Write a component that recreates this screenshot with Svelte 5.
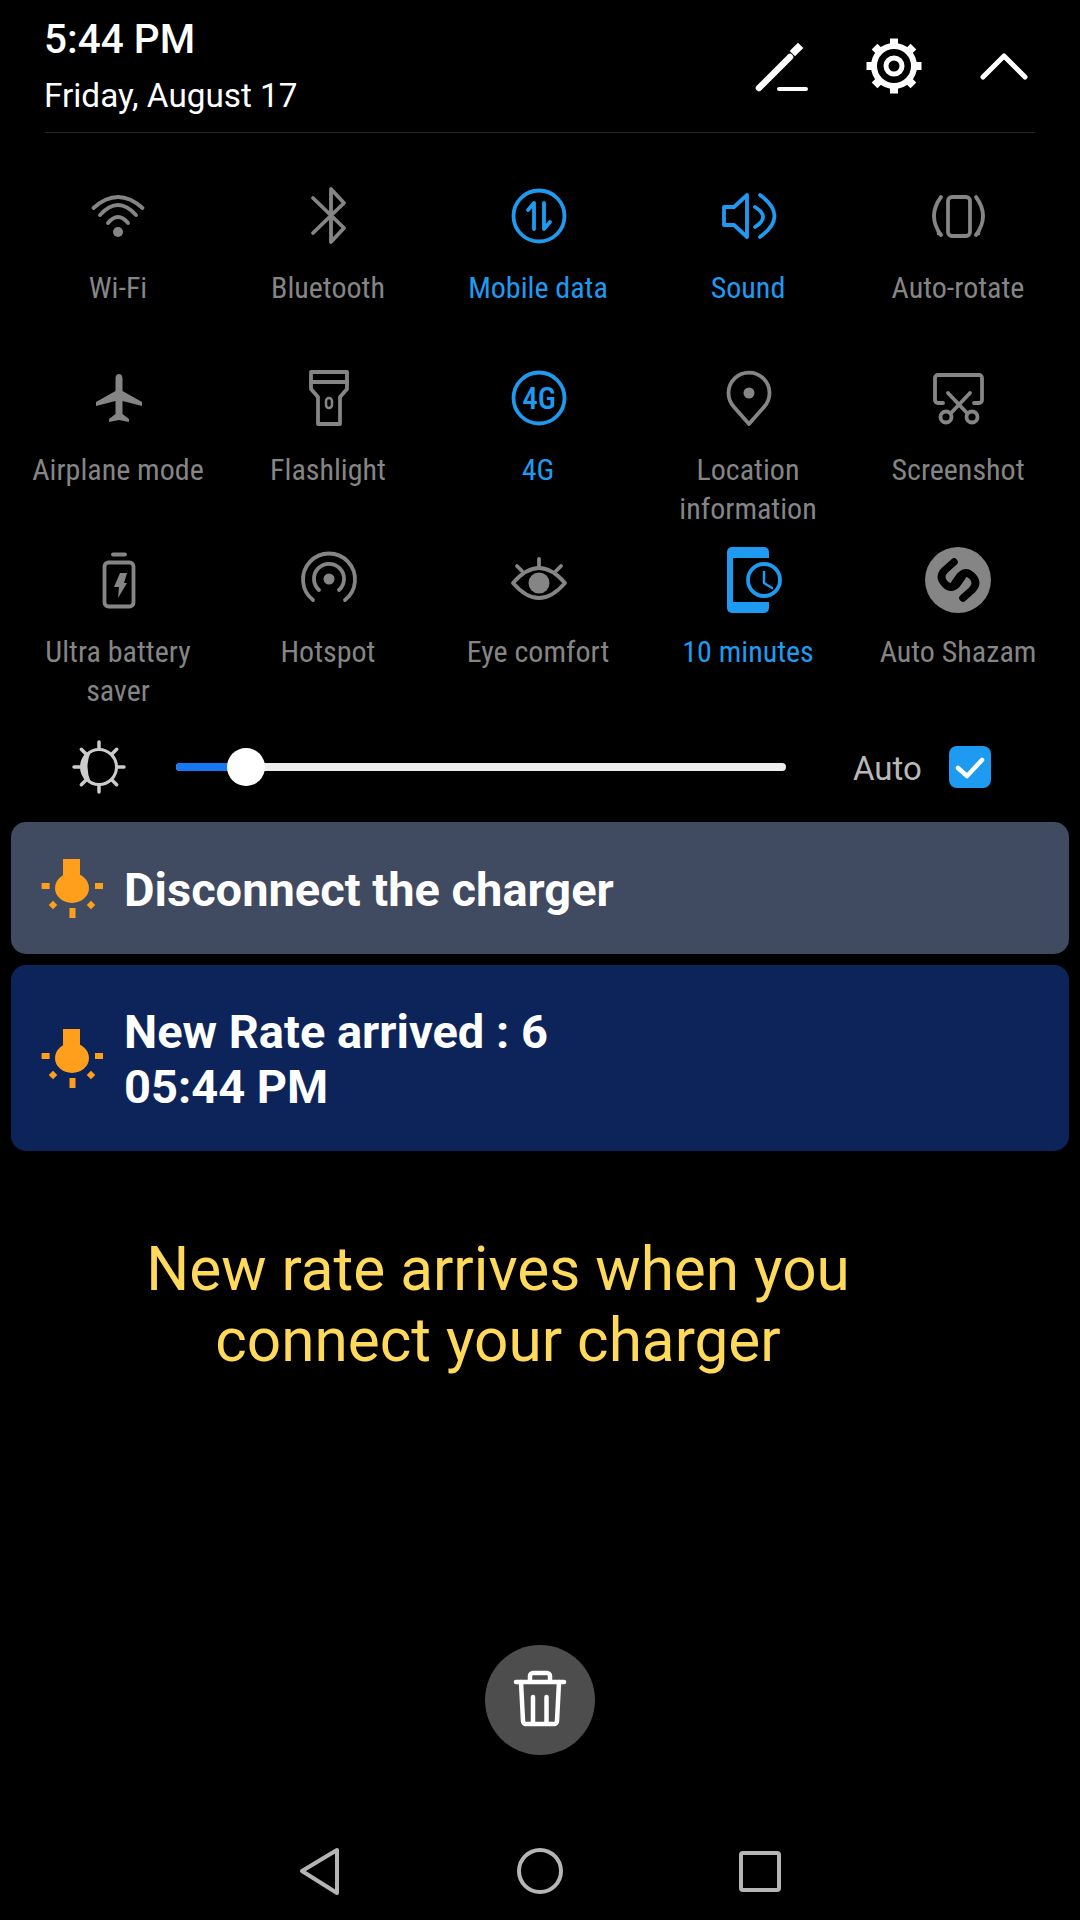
<script>
    // Gear teeth and brightness rays are just rotated copies
    const teeth = [0, 45, 90, 135, 180, 225, 270, 315];
</script>

<div class="page">
    <header class="top">
        <div class="when">
            <div class="time">5:44 PM</div>
            <div class="date">Friday, August 17</div>
        </div>
        <div class="actions">
            <svg class="act" viewBox="0 0 60 60" width="60" height="60">
                <path d="M5 52 L36 21" stroke-width="6.5" />
                <path d="M41 15 L44 12" stroke-width="7.5" stroke-linecap="square" />
                <path d="M25 53 H52" stroke-width="4" />
            </svg>
            <svg class="act gear" viewBox="0 0 60 60" width="60" height="60">
                <circle cx="30" cy="30" r="20" stroke-width="6" />
                <circle cx="30" cy="30" r="8" stroke-width="5" />
                {#each teeth as deg}
                    <path d="M30 9 V2.5" stroke-width="8" transform="rotate({deg} 30 30)" />
                {/each}
            </svg>
            <svg class="act chev" viewBox="0 0 60 60" width="60" height="60">
                <path d="M9 41 L30 20 L51 41" stroke-width="5" />
            </svg>
        </div>
    </header>

    <section class="tiles">
        <div class="tile">
            <svg class="icon" viewBox="0 0 70 70">
                <path d="M10.5 27 Q35 5 59.5 27" />
                <path d="M17 34 Q35 14 53 34" />
                <path d="M25 42 Q35 30 45 42" />
                <circle class="solid" cx="35" cy="51" r="5" />
            </svg>
            <span>Wi-Fi</span>
        </div>
        <div class="tile">
            <svg class="icon" viewBox="0 0 70 70">
                <path d="M20 17 L51 47 L38 61 V8 L51 22 L20 52" />
            </svg>
            <span>Bluetooth</span>
        </div>
        <div class="tile on">
            <svg class="icon" viewBox="0 0 70 70">
                <circle cx="36" cy="35" r="25.5" />
                <path d="M31 48 V22 L25 29" />
                <path d="M41 22 V48 L47 41" />
            </svg>
            <span>Mobile data</span>
        </div>
        <div class="tile on">
            <svg class="icon" viewBox="0 0 70 70">
                <path d="M34 14 L21 26 H11 V44 H21 L34 56 Z" />
                <path d="M42 26 Q58 36 42 46" />
                <path d="M47 14 Q76 35 47 56" />
            </svg>
            <span>Sound</span>
        </div>
        <div class="tile">
            <svg class="icon" viewBox="0 0 70 70">
                <rect x="25" y="16" width="22" height="39" rx="4" />
                <path d="M18 16 Q4 35 18 54" />
                <path d="M53 16 Q67 35 53 54" />
                <path class="solid" d="M13 43 L20 55 L14 54 Z" />
                <path class="solid" d="M58 43 L51 55 L57 54 Z" />
            </svg>
            <span>Auto-rotate</span>
        </div>

        <div class="tile">
            <svg class="icon" viewBox="0 0 70 70">
                <path class="solid" d="M36 11 c3 0 3.5 3 3.5 5 V28 L59 39 V43 L39.5 38 V51 L46 56 V59 L36 57 L26 59 V56 L32.5 51 V38 L13 43 V39 L32.5 28 V16 c0-2 .5-5 3.5-5 Z" />
            </svg>
            <span>Airplane mode</span>
        </div>
        <div class="tile">
            <svg class="icon" viewBox="0 0 70 70">
                <path d="M18 9 H54 V26 L47 34 V61 H25 V34 L18 26 Z" />
                <path d="M18 19 H54" />
                <rect class="thin" x="33" y="35" width="6" height="10" rx="3" />
            </svg>
            <span>Flashlight</span>
        </div>
        <div class="tile on">
            <svg class="icon" viewBox="0 0 70 70">
                <circle cx="36" cy="35" r="25.5" />
                <text class="fourg" x="36" y="46">4G</text>
            </svg>
            <span>4G</span>
        </div>
        <div class="tile">
            <svg class="icon" viewBox="0 0 70 70">
                <path d="M36 61 L21 44 A20.5 20.5 0 1 1 51 44 Z" />
                <circle class="solid" cx="36" cy="30" r="5.5" />
            </svg>
            <span>Location information</span>
        </div>
        <div class="tile">
            <svg class="icon" viewBox="0 0 70 70">
                <path d="M20 40 H15 a3 3 0 0 1-3-3 V15 a3 3 0 0 1 3-3 H56 a3 3 0 0 1 3 3 V37 a3 3 0 0 1-3 3 H51" />
                <path d="M25 30 L44 50" />
                <path d="M47 30 L28 50" />
                <circle cx="23" cy="54" r="5.5" />
                <circle cx="49" cy="54" r="5.5" />
            </svg>
            <span>Screenshot</span>
        </div>

        <div class="tile">
            <svg class="icon" viewBox="0 0 70 70">
                <path d="M30 9.5 H42" />
                <rect x="21.5" y="17.5" width="29" height="44" rx="4" />
                <path class="solid" d="M37 28 H44 L41 38 H44 L35 53 L36 42 H31 Z" />
            </svg>
            <span>Ultra battery saver</span>
        </div>
        <div class="tile">
            <svg class="icon" viewBox="0 0 70 70">
                <path d="M20 55 A26 26 0 1 1 52 55" />
                <path d="M26 45 A15 15 0 1 1 46 45" />
                <circle class="solid" cx="36" cy="34" r="5.5" />
            </svg>
            <span>Hotspot</span>
        </div>
        <div class="tile">
            <svg class="icon" viewBox="0 0 70 70">
                <path d="M10 38 Q36 8 62 38 Q36 68 10 38 Z" />
                <circle class="solid" cx="36" cy="38" r="10.5" />
                <path d="M36 14 V22" />
                <path d="M14 21 L19 26" />
                <path d="M58 21 L53 26" />
            </svg>
            <span>Eye comfort</span>
        </div>
        <div class="tile on">
            <svg class="icon" viewBox="0 0 70 70">
                <rect class="solid" x="14" y="2" width="42" height="66" rx="5" />
                <rect class="screen" x="20" y="13" width="38" height="44" />
                <circle class="dial" cx="51" cy="35" r="16" />
                <path class="thin" d="M51 27 V38 L59 43" />
            </svg>
            <span>10 minutes</span>
        </div>
        <div class="tile">
            <svg class="icon" viewBox="0 0 70 70">
                <circle class="solid" cx="35" cy="35" r="33" />
                <path class="shazam" d="M31 17 L22 25 Q15 32 22 39 Q28 45 34 39 L39 32" />
                <path class="shazam" d="M40 53 L49 45 Q56 38 49 31 Q43 25 37 31 L32 38" />
            </svg>
            <span>Auto Shazam</span>
        </div>
    </section>

    <section class="brightness">
        <svg class="sun" viewBox="0 0 56 54" width="56" height="54">
            <circle cx="28" cy="27" r="17.5" stroke-width="3" />
            <path d="M10.5 27 A17.5 17.5 0 0 1 20 11.5 Q13 27 20 42.5 A17.5 17.5 0 0 1 10.5 27 Z" fill="#ccc" />
            {#each teeth as deg}
                <path d="M28 8 V2" stroke-width="3.5" transform="rotate({deg} 28 27)" />
            {/each}
        </svg>
        <div class="track">
            <div class="fill"></div>
            <div class="knob"></div>
        </div>
        <span class="auto">Auto</span>
        <div class="check">
            <svg viewBox="0 0 42 42" width="42" height="42">
                <path d="M9 22 L18 30 L33 14" />
            </svg>
        </div>
    </section>

    <div class="card grey">
        <svg class="bulb" viewBox="0 0 62 59" width="62" height="59">
            <rect x="22" y="0" width="17" height="16" />
            <ellipse cx="31" cy="29" rx="17" ry="15" />
            <rect x="0.6" y="24" width="8" height="6" />
            <rect x="54" y="24" width="8" height="6" />
            <rect x="28.5" y="49" width="6" height="10" />
            <rect x="9" y="43" width="6" height="6" transform="rotate(45 12 46)" />
            <rect x="47" y="43" width="6" height="6" transform="rotate(45 50 46)" />
        </svg>
        <div class="msg">Disconnect the charger</div>
    </div>

    <div class="card navy">
        <svg class="bulb" viewBox="0 0 62 59" width="62" height="59">
            <rect x="22" y="0" width="17" height="16" />
            <ellipse cx="31" cy="29" rx="17" ry="15" />
            <rect x="0.6" y="24" width="8" height="6" />
            <rect x="54" y="24" width="8" height="6" />
            <rect x="28.5" y="49" width="6" height="10" />
            <rect x="9" y="43" width="6" height="6" transform="rotate(45 12 46)" />
            <rect x="47" y="43" width="6" height="6" transform="rotate(45 50 46)" />
        </svg>
        <div class="msg">New Rate arrived : 6<br />05:44 PM</div>
    </div>

    <p class="hint">New rate arrives when you<br />connect your charger</p>

    <div class="clear">
        <svg viewBox="0 0 110 110" width="110" height="110">
            <path d="M31 37 H79" />
            <path d="M45 36 V31 a3 3 0 0 1 3-3 H62 a3 3 0 0 1 3 3 V36" />
            <path d="M36 37 L38 76 a3 3 0 0 0 3 3 H69 a3 3 0 0 0 3-3 L74 37" />
            <path d="M48 52 V78" />
            <path d="M61.5 52 V78" />
        </svg>
    </div>

    <nav class="nav">
        <svg viewBox="0 0 60 60" width="60" height="60"><path d="M12 30 L47 9 V52 Z" /></svg>
        <svg viewBox="0 0 60 60" width="60" height="60"><circle cx="30" cy="30" r="21" /></svg>
        <svg viewBox="0 0 60 60" width="60" height="60"><rect x="11" y="12" width="38" height="37" rx="2" /></svg>
    </nav>
</div>

<style>
    :global(body) {
        background: #000;
    }

    .page {
        width: 1080px;
        height: 1920px;
        display: flex;
        flex-direction: column;
        background: #000;
        color: #fff;
        font-family: Roboto, "Liberation Sans", sans-serif;
        overflow: hidden;
    }

    .top {
        height: 132px;
        margin: 0 45px;
        border-bottom: 1px solid #262626;
        display: flex;
        justify-content: space-between;
    }

    .when {
        margin-left: -1px;
    }

    .time {
        font-size: 40.5px;
        font-weight: 500;
        line-height: 46px;
        margin-top: 16px;
    }

    .date {
        font-size: 33.3px;
        line-height: 40px;
        margin-top: 14px;
    }

    .actions {
        display: flex;
        gap: 50px;
        padding: 36px 0 0 0;
        margin-right: 1px;
        height: 60px;
    }

    .act {
        fill: none;
        stroke: #fff;
        stroke-linecap: round;
        stroke-linejoin: round;
    }

    .gear path {
        stroke-linecap: butt;
    }

    .tiles {
        display: grid;
        grid-template-columns: repeat(5, 210px);
        grid-auto-rows: 182px;
        margin: 48px 0 0 13px;
    }

    .tile {
        display: flex;
        flex-direction: column;
        align-items: center;
        color: #858585;
    }

    .tile.on {
        color: #1e9bf0;
    }

    .tile span {
        margin-top: 18px;
        width: 190px;
        text-align: center;
        font-size: 30px;
        line-height: 38.5px;
        font-stretch: 75%;
    }

    .icon {
        width: 70px;
        height: 70px;
        fill: none;
        stroke: currentColor;
        stroke-width: 3.8;
        stroke-linecap: round;
        stroke-linejoin: round;
    }

    .icon .solid {
        fill: currentColor;
        stroke: none;
    }

    .icon .thin {
        stroke-width: 2.5;
    }

    .icon .screen {
        fill: #000;
        stroke: none;
    }

    .icon .dial {
        fill: #000;
    }

    .icon .shazam {
        stroke: #000;
        stroke-width: 7.5;
    }

    .fourg {
        fill: currentColor;
        stroke: none;
        font-size: 31px;
        font-weight: 500;
        font-stretch: 75%;
        text-anchor: middle;
    }

    .brightness {
        display: flex;
        align-items: center;
        height: 54px;
        margin-top: 13px;
        padding-left: 71px;
    }

    .sun {
        fill: none;
        stroke: #ccc;
        stroke-linecap: round;
    }

    .sun path:first-of-type {
        stroke: none;
    }

    .track {
        position: relative;
        width: 610px;
        height: 8px;
        margin-left: 49px;
        border-radius: 4px;
        background: #eee;
    }

    .fill {
        width: 60px;
        height: 100%;
        border-radius: 4px;
        background: #1778f2;
    }

    .knob {
        position: absolute;
        left: 51px;
        top: -15px;
        width: 38px;
        height: 38px;
        border-radius: 50%;
        background: #fff;
    }

    .auto {
        margin-left: 67px;
        padding-top: 2px;
        font-size: 33px;
        color: #b8b8b8;
    }

    .check {
        width: 42px;
        height: 42px;
        margin-left: 27px;
        border-radius: 8px;
        background: #1e9bf0;
    }

    .check svg {
        display: block;
        fill: none;
        stroke: #fff;
        stroke-width: 4.5;
        stroke-linecap: round;
        stroke-linejoin: round;
    }

    .card {
        display: flex;
        align-items: center;
        gap: 21px;
        margin: 0 11px;
        padding-left: 30px;
        border-radius: 15px;
    }

    .grey {
        height: 132px;
        margin-top: 28px;
        background: #404a60;
    }

    .navy {
        height: 186px;
        margin-top: 11px;
        background: #0d245b;
    }

    .bulb {
        flex: none;
        fill: #ff9f1c;
    }

    .msg {
        padding-top: 2px;
        font-size: 47px;
        font-weight: 700;
        line-height: 55px;
    }

    .hint {
        width: 996px;
        margin: 83px 0 0;
        text-align: center;
        font-size: 60.3px;
        line-height: 71px;
        color: #ffd95a;
    }

    .clear {
        width: 110px;
        height: 110px;
        margin: auto auto 86px;
        border-radius: 50%;
        background: #4d4d4d;
    }

    .clear svg {
        display: block;
        fill: none;
        stroke: #fff;
        stroke-width: 4.5;
        stroke-linecap: round;
        stroke-linejoin: round;
    }

    .nav {
        display: flex;
        justify-content: center;
        gap: 160px;
        padding-bottom: 19px;
    }

    .nav svg {
        fill: none;
        stroke: #b5b5b5;
        stroke-width: 4;
        stroke-linejoin: round;
    }
</style>
